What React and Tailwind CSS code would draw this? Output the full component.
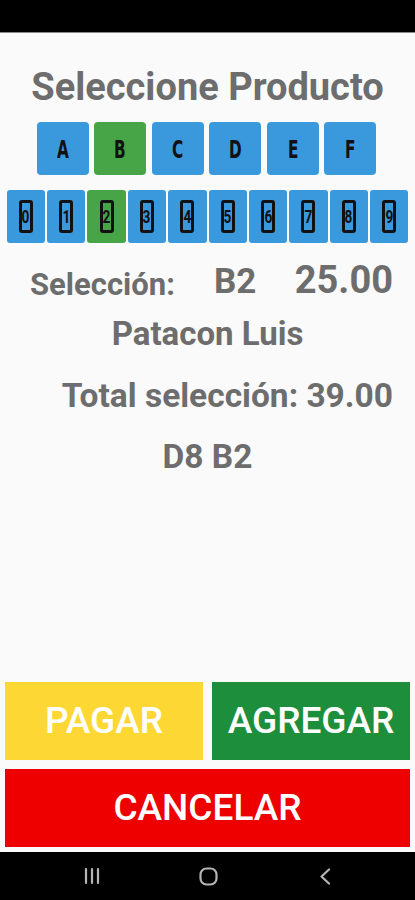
import React from 'react';

const LETTERS = ['A', 'B', 'C', 'D', 'E', 'F'];
const DIGITS = ['0', '1', '2', '3', '4', '5', '6', '7', '8', '9'];

const roboto = { fontFamily: 'Roboto, "Liberation Sans", sans-serif' };

const App = () => {
    const selLetter = 'B';
    const selDigit = '2';

    return (
        <div className="flex flex-col h-[900px] w-[415px] bg-[#fafafa] overflow-hidden" style={roboto}>
            {/* status bar */}
            <div className="h-[33px] bg-black border-b border-[#8a8a8a] shrink-0" />

            {/* ── Main ───────────────────────────────── */}
            <div className="flex-1 flex flex-col text-[#6d6d6d] font-bold">
                <h1 className="mt-[35px] text-center text-[38px] leading-none">Seleccione Producto</h1>

                <div className="mt-[16px] flex justify-center gap-[5.5px] pr-[2px]">
                    {LETTERS.map(l => (
                        <button
                            key={l}
                            className={`w-[52px] h-[53px] rounded-[4px] flex items-center justify-center text-[#111] text-[20px] font-bold ${l === selLetter ? 'bg-[#47a447]' : 'bg-[#3a98dc]'}`}
                            style={{ fontFamily: '"DejaVu Sans Condensed", "DejaVu Sans", sans-serif' }}
                        >
                            <span className="inline-block scale-x-[0.85] scale-y-[1.25]">{l}</span>
                        </button>
                    ))}
                </div>

                <div className="mt-[15px] flex justify-center gap-[2px]">
                    {DIGITS.map(d => (
                        <button
                            key={d}
                            className={`w-[38.4px] h-[53px] rounded-[3px] flex items-center justify-center ${d === selDigit ? 'bg-[#47a447]' : 'bg-[#3a98dc]'}`}
                        >
                            <span className="w-[14px] h-[33px] border-[3px] border-[#111] rounded-[3px] flex items-center justify-center text-[#111] text-[19px] font-bold leading-none">
                                <span className="inline-block scale-x-[0.72]">{d}</span>
                            </span>
                        </button>
                    ))}
                </div>

                <div className="mt-[18px] flex items-baseline pl-[30px] pr-[22px] leading-none">
                    <span className="text-[31px] translate-y-[2px]">Selección:</span>
                    <span className="ml-[39px] text-[35px]">B2</span>
                    <span className="ml-auto text-[38px]">25.00</span>
                </div>

                <div className="mt-[18px] text-center text-[33px] leading-none">Patacon Luis</div>

                <div className="mt-[29px] text-right pr-[22px] text-[33.5px] leading-none">Total selección: 39.00</div>

                <div className="mt-[27px] text-center text-[33.5px] leading-none">D8 B2</div>
            </div>

            {/* ── Actions ────────────────────────────── */}
            <div className="px-[5px] pb-[5px] flex flex-col gap-[9px] shrink-0">
                <div className="flex gap-[9px]">
                    <button className="flex-1 h-[78px] bg-[#fdd835] text-white text-[37px] font-medium">PAGAR</button>
                    <button className="flex-1 h-[78px] bg-[#1d8e3c] text-white text-[37px] font-medium">AGREGAR</button>
                </div>
                <button className="h-[78px] bg-[#ee0000] text-white text-[37px] font-medium">CANCELAR</button>
            </div>

            {/* nav bar */}
            <div className="h-[48px] bg-black shrink-0 flex items-center pl-[83px]">
                <svg width="18" height="18" viewBox="0 0 18 18">
                    <g stroke="#b5b5b5" strokeWidth="2.2" strokeLinecap="round">
                        <line x1="3" y1="2" x2="3" y2="16" />
                        <line x1="9" y1="2" x2="9" y2="16" />
                        <line x1="15" y1="2" x2="15" y2="16" />
                    </g>
                </svg>
                <svg width="19" height="19" viewBox="0 0 19 19" className="ml-[98px]">
                    <rect x="1.5" y="1.5" width="16" height="16" rx="6" fill="none" stroke="#b5b5b5" strokeWidth="2.2" />
                </svg>
                <svg width="12" height="17" viewBox="0 0 12 17" className="ml-[101px]">
                    <path d="M10 1.5 L2.5 8.5 L10 15.5" fill="none" stroke="#b5b5b5" strokeWidth="2.2" strokeLinecap="round" strokeLinejoin="round" />
                </svg>
            </div>
        </div>
    );
};

export default App;
